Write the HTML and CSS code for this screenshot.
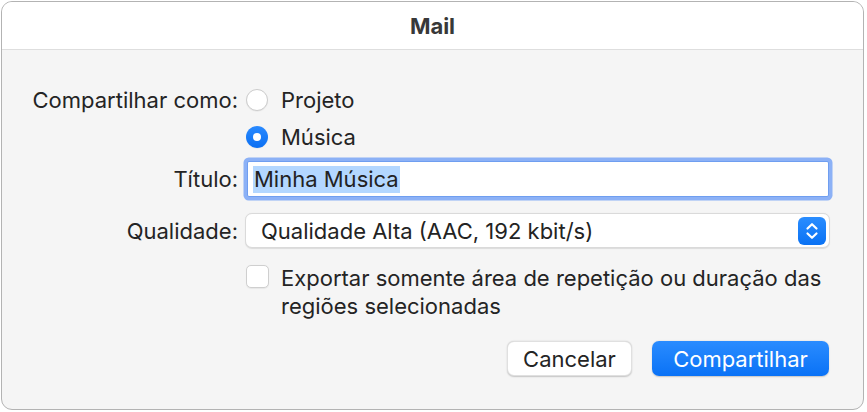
FILE: index.html
```html
<!DOCTYPE html>
<html lang="pt">
<head>
<meta charset="utf-8">
<title>Mail</title>
<link rel="stylesheet" href="styles.css">
</head>
<body>
<div class="window">
  <div class="titlebar">Mail</div>
  <div class="content">
    <div class="form">
      <div class="label row-r1">Compartilhar como:</div>
      <div class="control row-r1">
        <label class="radio-item"><span class="radio"></span><span>Projeto</span></label>
      </div>
      <div class="control row-r2 col2">
        <label class="radio-item"><span class="radio on"></span><span>Música</span></label>
      </div>
      <div class="label row-r3">Título:</div>
      <div class="control row-r3">
        <div class="field"><span class="sel">Minha Música</span></div>
      </div>
      <div class="label row-r4">Qualidade:</div>
      <div class="control row-r4">
        <div class="popup">
          <span class="popup-text">Qualidade Alta (AAC, 192 kbit/s)</span>
          <span class="stepper">
            <svg width="28" height="28" viewBox="0 0 28 28"><path d="M9.5 11.5 L14 7.2 L18.5 11.5" fill="none" stroke="#fff" stroke-width="2.2" stroke-linecap="round" stroke-linejoin="round"/><path d="M9.5 16.5 L14 20.8 L18.5 16.5" fill="none" stroke="#fff" stroke-width="2.2" stroke-linecap="round" stroke-linejoin="round"/></svg>
          </span>
        </div>
      </div>
      <div class="control row-r5 col2">
        <label class="check-item"><span class="checkbox"></span><span class="check-text">Exportar somente área de repetição ou duração das regiões selecionadas</span></label>
      </div>
      <div class="control row-r6 col2 buttons">
        <button class="btn">Cancelar</button>
        <button class="btn primary">Compartilhar</button>
      </div>
    </div>
  </div>
</div>
</body>
</html>
```

FILE: styles.css
```css
html, body {
  margin: 0;
  padding: 0;
  background: #ffffff;
}
body {
  font-family: Inter, "Noto Sans", "DejaVu Sans", sans-serif;
  color: #242424;
  width: 867px;
  height: 412px;
  overflow: hidden;
}
.window {
  margin: 1px 0 0 1px;
  width: 861px;
  height: 407px;
  border: 1px solid #b3b3b3;
  border-radius: 11px;
  overflow: hidden;
  background: #f5f5f5;
  display: flex;
  flex-direction: column;
}
.titlebar {
  height: 48px;
  background: #ffffff;
  border-bottom: 1px solid #dedede;
  display: flex;
  align-items: center;
  justify-content: center;
  font-weight: 700;
  font-size: 22px;
  color: #383838;
  box-sizing: border-box;
  flex: none;
}
.content {
  flex: 1;
  padding-top: 31px;
}
.form {
  display: grid;
  grid-template-columns: 236px 587px;
  column-gap: 6px;
  font-size: 22px;
}
.label {
  grid-column: 1;
  text-align: right;
  display: flex;
  align-items: center;
  justify-content: flex-end;
  white-space: nowrap;
}
.control {
  grid-column: 2;
  display: flex;
  align-items: center;
}
.row-r1 { grid-row: 1; height: 37px; }
.row-r2 { grid-row: 2; height: 37px; }
.row-r3 { grid-row: 3; height: 48px; }
.row-r4 { grid-row: 4; height: 35px; margin-top: 10px; }
.row-r5 { grid-row: 5; margin-top: 16px; align-items: flex-start; }
.row-r6 { grid-row: 6; margin-top: 21px; }

.radio-item {
  display: flex;
  align-items: center;
  gap: 13px;
  margin-left: 2px;
}
.radio {
  width: 22px;
  height: 22px;
  border-radius: 50%;
  box-sizing: border-box;
  background: #ffffff;
  border: 1px solid #cccccc;
  box-shadow: 0 0.5px 1px rgba(0,0,0,0.08);
  position: relative;
  flex: none;
}
.radio.on {
  border: none;
  background: linear-gradient(#2a8aff, #0a6ff2);
}
.radio.on::after {
  content: "";
  position: absolute;
  left: 7px;
  top: 7px;
  width: 8px;
  height: 8px;
  border-radius: 50%;
  background: #ffffff;
}
.field {
  margin: 0 2px 0 3px;
  width: 100%;
  height: 36px;
  box-sizing: border-box;
  background: #ffffff;
  border: 1px solid #6f9ef0;
  box-shadow: 0 0 0 3.5px #8cb1f6;
  border-radius: 2px;
  display: flex;
  align-items: center;
  padding-left: 5px;
}
.sel {
  background: #b3d7ff;
  line-height: 27px;
  padding: 0 1px;
  color: #222;
}
.popup {
  margin: 0 1px 0 1px;
  width: 100%;
  height: 35px;
  box-sizing: border-box;
  background: #ffffff;
  border: 1px solid #dadada;
  border-radius: 7px;
  box-shadow: 0 0.5px 1px rgba(0,0,0,0.1);
  display: flex;
  align-items: center;
  justify-content: space-between;
  padding: 0 3px 0 15px;
}
.popup-text {
  color: #232323;
}
.stepper {
  width: 28px;
  height: 28px;
  border-radius: 6px;
  background: linear-gradient(#2a8dff, #0a72f4);
  display: flex;
}
.check-item {
  display: flex;
  align-items: flex-start;
  gap: 12px;
  margin-left: 2px;
}
.checkbox {
  width: 23px;
  height: 23px;
  box-sizing: border-box;
  border: 1px solid #cfcfcf;
  border-radius: 5px;
  background: #ffffff;
  box-shadow: 0 0.5px 1px rgba(0,0,0,0.06);
  margin-top: 1px;
  flex: none;
}
.check-text {
  line-height: 28px;
  width: 560px;
}
.buttons {
  justify-content: flex-end;
  gap: 20px;
  padding-right: 2px;
}
.btn {
  font-family: inherit;
  font-size: 22px;
  height: 35px;
  border-radius: 7px;
  border: 0.5px solid rgba(0,0,0,0.12);
  background: #ffffff;
  color: #242424;
  box-shadow: 0 0.5px 1.5px rgba(0,0,0,0.2);
  padding: 0;
  width: 125px;
}
.btn.primary {
  width: 177px;
  color: #ffffff;
  border: none;
  background: linear-gradient(#2a8cff, #0a72f6);
}
```
